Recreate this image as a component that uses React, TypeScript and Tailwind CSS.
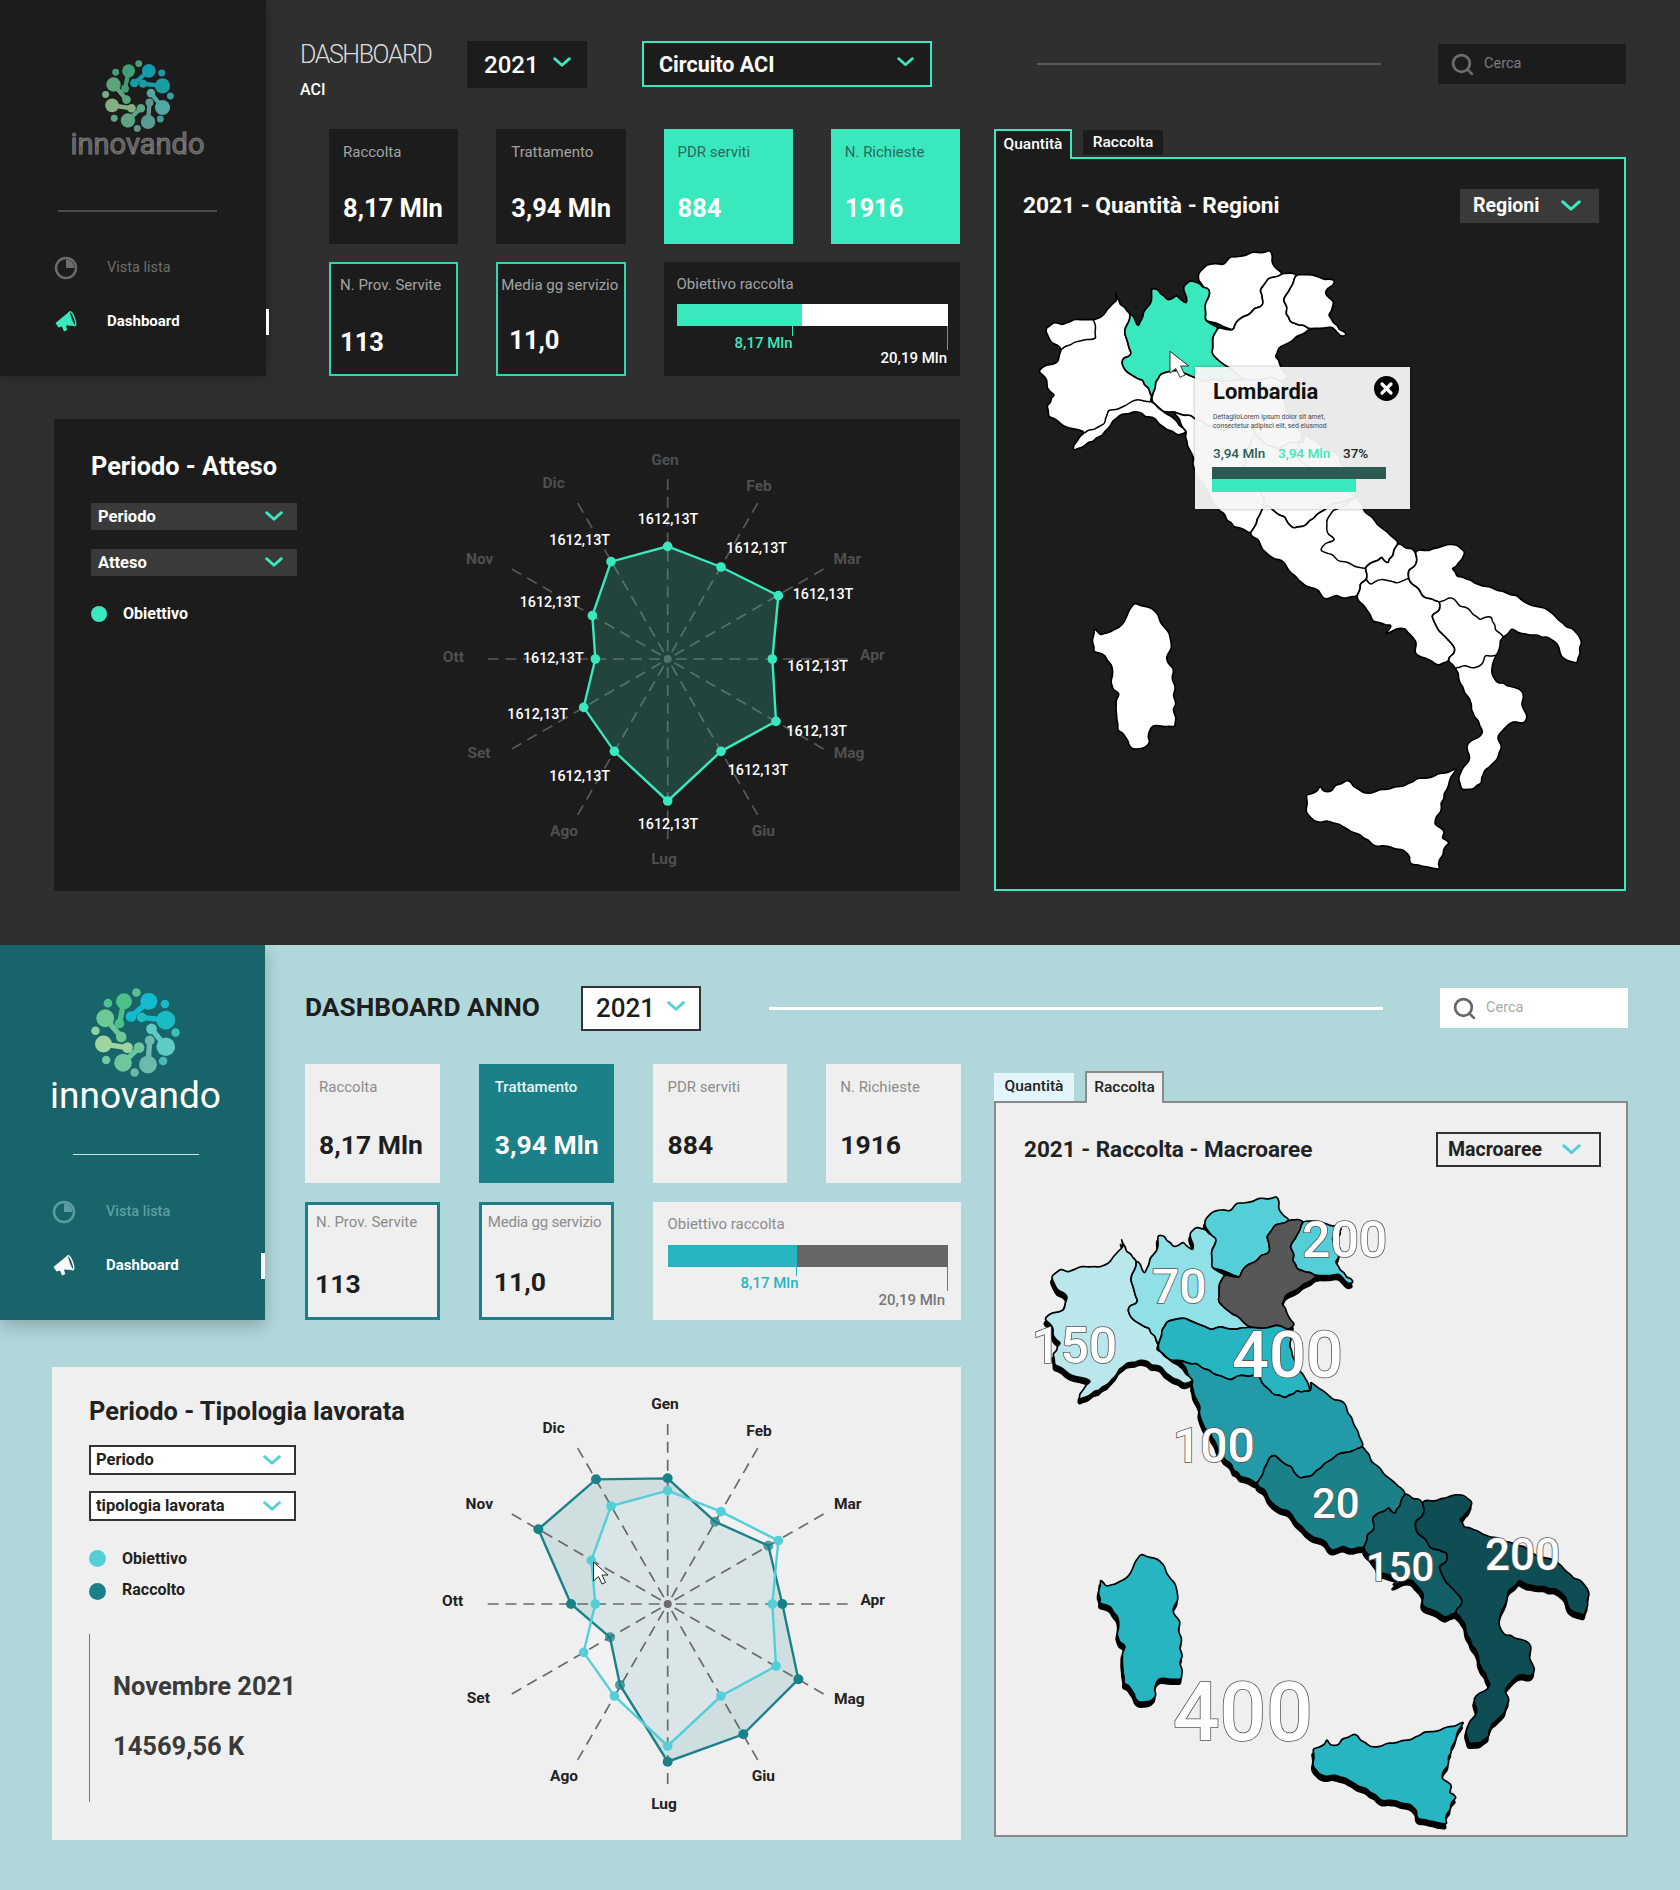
import React from "react";
import { Search } from "lucide-react";

type Pt = [number, number];
const parse = (s: string): Pt[] =>
  s.trim().split(/\s+/).map((p) => p.split(",").map(Number) as Pt);
const shift = (s: string, dx: number, dy: number) =>
  parse(s).map(([x, y]) => `${x + dx},${y + dy}`).join(" ");
const hash = (n: number) => {
  const v = Math.sin(n * 12.9898) * 43758.5453;
  return v - Math.floor(v) - 0.5;
};
const wobble = (s: string, closed = true) => {
  const pts = parse(s);
  if (closed) pts.push(pts[0]);
  const all: Pt[] = [pts[0]];
  for (let i = 0; i < pts.length - 1; i++) {
    const a = pts[i];
    const b = pts[i + 1];
    const flip = a[0] > b[0] || (a[0] === b[0] && a[1] > b[1]);
    const A = flip ? b : a;
    const B = flip ? a : b;
    const len = Math.hypot(B[0] - A[0], B[1] - A[1]);
    const n = Math.max(1, Math.floor(len / 13));
    const seg: Pt[] = [];
    for (let k = 1; k < n; k++) {
      const t = k / n;
      const j = hash(A[0] * 3.1 + A[1] * 7.7 + k * 13.3 + B[0]) * 11;
      seg.push([
        A[0] + (B[0] - A[0]) * t + (-(B[1] - A[1]) / len) * j,
        A[1] + (B[1] - A[1]) * t + ((B[0] - A[0]) / len) * j,
      ]);
    }
    if (flip) seg.reverse();
    seg.forEach((p) => all.push(p));
    all.push(b);
  }
  const mid = (p: Pt, q: Pt): Pt => [(p[0] + q[0]) / 2, (p[1] + q[1]) / 2];
  const f = (p: Pt) => `${p[0].toFixed(1)},${p[1].toFixed(1)}`;
  if (closed) {
    all.pop();
    const m0 = mid(all[all.length - 1], all[0]);
    let d = `M${f(m0)}`;
    all.forEach((p, i) => {
      d += ` Q${f(p)} ${f(mid(p, all[(i + 1) % all.length]))}`;
    });
    return d + "Z";
  }
  let d = `M${f(all[0])}`;
  for (let i = 1; i < all.length - 1; i++) d += ` Q${f(all[i])} ${f(mid(all[i], all[i + 1]))}`;
  return d + ` L${f(all[all.length - 1])}`;
};

const NW =
  "255,155 262,180 240,200 222,225 190,240 145,238 95,255 75,245 45,268 55,290 65,310 95,328 85,365 50,375 25,395 45,410 50,440 75,465 50,495 55,530 90,550 150,570 165,578 130,615 130,632 190,605 235,565 270,525 310,515 360,530 400,560 440,585 470,575 431,535 395,510 360,485 366,470 340,420 290,395 275,365 305,340 285,265 300,220 270,195";
const LOMB =
  "285,265 300,220 325,260 340,215 362,190 365,145 385,148 410,180 440,165 470,190 460,140 480,122 510,130 540,155 525,190 525,240 565,262 548,290 545,340 590,380 640,418 600,424 555,416 525,426 490,411 446,391 411,396 391,401 376,426 366,470 340,420 290,395 275,365 305,340";
const TREN =
  "505,100 530,75 580,75 600,50 650,45 720,30 725,65 758,100 715,115 690,150 700,190 655,225 620,245 610,270 570,255 525,240 525,190 540,155 505,120";
const VEN =
  "758,100 800,105 790,130 760,180 780,245 850,265 790,300 745,325 735,350 755,385 775,410 755,426 720,411 670,421 640,418 590,380 545,340 548,290 565,262 610,270 620,245 655,225 700,190 690,150 715,115";
const FRIULI =
  "800,105 870,112 915,122 885,160 912,185 895,225 910,250 950,285 935,290 905,260 880,265 850,265 780,245 760,180 790,130";
const EMILIA =
  "366,470 376,426 391,401 411,396 446,391 490,411 525,426 555,416 600,424 640,418 670,421 720,411 755,426 765,485 780,534 815,584 820,608 780,604 745,628 710,618 675,584 670,564 620,559 585,574 540,559 480,525 431,515 401,515 366,485";
const CENTRE =
  "431,515 470,575 471,603 486,643 491,682 525,742 565,810 610,860 660,880 680,850 700,801 715,796 740,820 765,830 790,865 820,860 859,825 894,801 979,771 954,712 924,643 879,623 820,579 820,608 780,604 745,628 710,618 675,584 670,564 620,559 585,574 540,559 480,525";
const LAZIO =
  "660,880 690,910 710,940 755,960 775,990 830,1040 855,1045 885,1078 920,1065 950,1075 980,1070 990,1030 1010,1020 1005,985 1030,965 1055,950 1075,970 1105,910 1050,860 1000,810 979,771 894,801 859,825 820,860 790,865 765,830 740,820 715,796 700,801 680,850";
const CAMP =
  "1105,910 1155,935 1160,970 1135,990 1135,1015 1160,1040 1190,1075 1230,1085 1230,1110 1205,1125 1220,1160 1255,1200 1275,1225 1255,1265 1225,1277 1200,1260 1155,1240 1160,1210 1125,1165 1100,1165 1065,1182 1085,1155 1030,1145 1010,1110 980,1070 990,1030 1010,1020 1005,985 1030,965 1055,950 1075,970";
const SOUTH = shift(
  "645,155 700,145 770,135 795,155 785,180 755,205 770,230 880,265 950,285 990,315 1050,335 1090,370 1135,405 1145,430 1132,490 1085,470 1070,430 1040,410 1000,405 960,400 935,385 910,410 890,465 875,520 885,540 935,560 970,580 965,610 982,650 975,668 930,670 895,705 905,745 885,785 855,810 845,850 820,868 785,870 775,835 790,800 810,770 800,735 815,720 848,700 820,640 805,590 780,550 765,505 745,485 765,445 745,420 710,380 695,345 720,330 720,305 680,295 650,260 625,235 625,210 650,190",
  510,
  780
);
const SICILY = shift(
  "770,805 740,870 705,975 735,995 725,1015 748,1030 720,1075 720,1108 680,1100 640,1095 610,1050 570,1040 530,1040 490,1015 440,985 390,965 350,965 320,940 318,885 355,870 360,855 370,875 395,875 405,855 440,840 460,860 505,880 540,868 600,860 650,835 700,830",
  510,
  780
);
const SARD = shift(
  "165,128 200,140 215,145 235,165 240,185 270,230 275,265 258,295 280,325 285,500 250,500 225,495 208,515 210,545 190,565 160,568 135,530 112,512 110,465 108,420 120,400 100,390 92,365 98,330 75,285 40,275 42,205 60,225 100,210 130,190 145,155",
  150,
  960
);
const SEAMS = [
  "190,240 198,295 135,305 95,328",
  "165,578 225,550 235,510 290,495 325,478 360,485",
  shift("720,305 760,295 780,320 810,330 840,360 875,350 885,390 910,410", 510, 780),
  shift("765,505 795,495 815,505 845,495 855,465 890,465", 510, 780),
  shift("500,240 510,255 535,240 590,250 625,235", 510, 780),
  shift("469,-9 400,30 380,60 380,90 405,120 375,130 360,150 400,165 415,185 450,190 495,205", 510, 780),
  "700,801 690,720 640,690 655,620 675,584",
  "820,579 790,640 850,690 900,720 979,771",
];

const DARK_REGIONS = [NW, TREN, VEN, FRIULI, EMILIA, CENTRE, LAZIO, CAMP, SOUTH, SICILY, SARD];
const LIGHT_REGIONS: [string, string][] = [
  [NW, "#b9e7eb"],
  [LOMB, "#90e0e7"],
  [TREN, "#54cfd8"],
  [FRIULI, "#54cfd8"],
  [VEN, "#575757"],
  [EMILIA, "#26b5c1"],
  [SARD, "#26b5c1"],
  [SICILY, "#26b5c1"],
  [CENTRE, "#229aa8"],
  [LAZIO, "#1b8189"],
  [CAMP, "#115e66"],
  [SOUTH, "#0f4d55"],
];

function DarkMap() {
  return (
    <svg width="572" height="640" viewBox="0 0 572 640" className="block">
      <g transform="scale(0.33333)" strokeLinejoin="round" strokeLinecap="round">
        {DARK_REGIONS.map((r, i) => (
          <path key={i} d={wobble(r)} fill="#ffffff" stroke="#000000" strokeWidth="5" />
        ))}
        {SEAMS.map((r, i) => (
          <path key={i} d={wobble(r, false)} fill="none" stroke="#000000" strokeWidth="4.5" />
        ))}
        <path d={wobble(LOMB)} fill="#3ae8bd" stroke="#000000" strokeWidth="5" />
        <path
          d="M420,335 L420,400 L437,385 L450,412 L465,405 L452,378 L475,378 Z"
          fill="#ffffff"
          stroke="#333333"
          strokeWidth="3"
        />
      </g>
    </svg>
  );
}

const NUMS: [string, number, number, number][] = [
  ["150", 2, 173, 50],
  ["70", 122, 113, 48],
  ["200", 272, 67, 50],
  ["400", 202, 187, 65],
  ["100", 143, 272, 48],
  ["20", 282, 328, 42],
  ["150", 336, 391, 40],
  ["200", 455, 380, 44],
  ["400", 143, 550, 82],
];

function LightMap() {
  return (
    <svg width="590" height="640" viewBox="0 0 590 640" className="block">
      <g transform="translate(6,-4) scale(0.3343,0.338)" strokeLinejoin="round" strokeLinecap="round">
        <g transform="translate(-3,14)">
          {LIGHT_REGIONS.map(([r], i) => (
            <path key={i} d={wobble(r)} fill="#000000" stroke="#000000" strokeWidth="6" />
          ))}
        </g>
        {LIGHT_REGIONS.map(([r, c], i) => (
          <path key={i} d={wobble(r)} fill={c} stroke="#000000" strokeWidth="5" />
        ))}
      </g>
      {NUMS.map(([t, x, y, s], i) => (
        <text
          key={i}
          x={x}
          y={y}
          fontSize={s}
          fontWeight={500}
          fill="#ffffff"
          stroke="#555555"
          strokeWidth="1.6"
          paintOrder="stroke"
        >
          {t}
        </text>
      ))}
    </svg>
  );
}

const MONTHS = ["Gen", "Feb", "Mar", "Apr", "Mag", "Giu", "Lug", "Ago", "Set", "Ott", "Nov", "Dic"];
const poly = (p: Pt[]) => p.map(([x, y]) => `${x / 3},${y / 3}`).join(" ");

function Axes({ cx, cy, color }: { cx: number; cy: number; color: string }) {
  return (
    <g>
      {MONTHS.map((_, i) => {
        const a = (i * Math.PI) / 6;
        const r1 = 8;
        const r2 = 180;
        return (
          <line
            key={i}
            x1={cx + Math.sin(a) * r1}
            y1={cy - Math.cos(a) * r1}
            x2={cx + Math.sin(a) * r2}
            y2={cy - Math.cos(a) * r2}
            stroke={color}
            strokeWidth="1.7"
            strokeDasharray="11 6.9"
          />
        );
      })}
      <circle cx={cx} cy={cy} r="4" fill={color} />
    </g>
  );
}

function MonthLabels({ pos, fill }: { pos: Pt[]; fill: string }) {
  return (
    <g>
      {pos.map(([x, y], i) => (
        <text key={i} x={x / 3} y={y / 3} textAnchor="middle" dominantBaseline="central" fontSize="15.5" fontWeight={700} fill={fill}>
          {MONTHS[i]}
        </text>
      ))}
    </g>
  );
}

function DarkRadar() {
  const pts: Pt[] = [[713,319],[873,381],[1045,467],[1027,657],[1038,844],[873,934],[713,1083],[553,934],[461,802],[496,657],[487,527],[543,365]];
  const labels: Pt[] = [[705,60],[987,138],[1252,357],[1327,646],[1257,940],[1000,1174],[702,1256],[402,1174],[147,938],[70,650],[149,356],[371,130]];
  const vals: Pt[] = [[714,238],[980,324],[1179,461],[1163,678],[1160,872],[984,990],[714,1153],[449,1009],[323,822],[370,654],[360,487],[449,300]];
  return (
    <svg width="480" height="440" viewBox="0 0 480 440" className="block shrink-0">
      <Axes cx={237.7} cy={219} color="#585858" />
      <polygon points={poly(pts)} fill="#3ae8bd" fillOpacity="0.2" stroke="#3ae8bd" strokeWidth="2.4" />
      {pts.map(([x, y], i) => (
        <circle key={i} cx={x / 3} cy={y / 3} r="4.8" fill="#3ae8bd" />
      ))}
      <MonthLabels pos={labels} fill="#4f4f4f" />
      {vals.map(([x, y], i) => (
        <text key={i} x={x / 3} y={y / 3} textAnchor="middle" dominantBaseline="central" fontSize="14.3" fontWeight={500} fill="#ffffff">
          1612,13T
        </text>
      ))}
    </svg>
  );
}

function LightRadar() {
  const a: Pt[] = [[713,295],[855,425],[1015,497],[1057,672],[1105,898],[940,1063],[713,1145],[570,915],[540,772],[423,672],[325,448],[498,298]];
  const b: Pt[] = [[713,332],[873,395],[1045,482],[1027,672],[1038,858],[873,948],[713,1098],[553,948],[461,817],[496,672],[484,541],[543,378]];
  const labels: Pt[] = [[705,73],[987,152],[1253,372],[1328,661],[1258,957],[1000,1188],[702,1272],[402,1189],[145,955],[68,664],[148,371],[371,144]];
  return (
    <svg width="480" height="440" viewBox="0 0 480 440" className="block shrink-0">
      <polygon points={poly(a)} fill="#1b8189" fillOpacity="0.15" />
      <polygon points={poly(b)} fill="#ffffff" fillOpacity="0.22" />
      <Axes cx={237.7} cy={224} color="#6a6a6a" />
      <polygon points={poly(a)} fill="none" stroke="#1b8189" strokeWidth="2.4" />
      {a.map(([x, y], i) => (
        <circle key={i} cx={x / 3} cy={y / 3} r="5" fill="#1b8189" fillOpacity={[1, 2, 7, 8].includes(i) ? 0.75 : 1} />
      ))}
      <polygon points={poly(b)} fill="none" stroke="#54cfd8" strokeWidth="2.4" />
      {b.map(([x, y], i) => (
        <circle key={i} cx={x / 3} cy={y / 3} r="4.8" fill="#54cfd8" />
      ))}
      <MonthLabels pos={labels} fill="#222222" />
      <path
        d="M163.5,182 L163.5,201 L168.5,196.5 L172,204 L175.5,202.5 L172,195 L178,195 Z"
        fill="#ffffff"
        stroke="#222222"
        strokeWidth="1"
      />
    </svg>
  );
}

function Logo({ size, dim }: { size: number; dim?: boolean }) {
  const blobs: [number, number, number, string, number, number, number][] = [
    [37, 15, 9, "#4cc08a", 32, 40, 5.5],
    [65, 15, 9.5, "#12bcd0", 45, 32, 6],
    [84, 36, 10.5, "#19bcc4", 57, 33, 5.5],
    [16, 34, 10, "#6cc894", 34, 55, 6],
    [14, 63, 9.5, "#9dd49f", 41, 67, 6],
    [84, 66, 10.5, "#5ecbc4", 68, 46, 6],
    [36, 84, 10, "#6cc79c", 54, 67, 6],
    [64, 86, 10, "#6cb9ad", 66, 59, 5.5],
  ];
  const dots: [number, number, string][] = [
    [51, 5, "#5bbd8e"],
    [19, 17, "#4cc392"],
    [83, 18, "#1ab9c9"],
    [5, 48, "#8fd2a0"],
    [95, 50, "#3bc0bf"],
    [17, 81, "#6cc9a4"],
    [81, 82, "#46bdb4"],
    [49, 95, "#6fb5ab"],
  ];
  return (
    <svg width={size} height={size} viewBox="0 0 100 100" className={dim ? "block opacity-80" : "block"}>
      {blobs.map(([x, y, r, c, x2, y2, r2], i) => (
        <g key={i} fill={c}>
          <line x1={x} y1={y} x2={x2} y2={y2} stroke={c} strokeWidth="6" />
          <circle cx={x} cy={y} r={r} />
          <circle cx={x2} cy={y2} r={r2} />
        </g>
      ))}
      {dots.map(([x, y, c], i) => (
        <circle key={i} cx={x} cy={y} r="4.8" fill={c} />
      ))}
    </svg>
  );
}

function PieIcon({ color }: { color: string }) {
  return (
    <svg width="24" height="24" viewBox="0 0 24 24" className="block shrink-0">
      <circle cx="12" cy="12" r="10" fill="none" stroke={color} strokeWidth="2.4" />
      <path d="M12 3.6 A8.4 8.4 0 0 1 20.4 12 L12 12 Z" fill={color} />
    </svg>
  );
}

function HornIcon({ color }: { color: string }) {
  return (
    <svg width="24" height="24" viewBox="0 0 24 24" className="block shrink-0">
      <path
        d="M1.5 14 L15.5 2.5 L21 17 L12 16.5 L13.2 21 L10 22.5 L8 17.5 L4.5 18.5 Z"
        fill={color}
      />
      <ellipse cx="18.3" cy="9.8" rx="2.2" ry="7.4" transform="rotate(-20 18.3 9.8)" fill="none" stroke={color} strokeWidth="1.4" />
      <ellipse cx="18.3" cy="10" rx="1.1" ry="4.8" transform="rotate(-20 18.3 10)" fill="#000000" fillOpacity="0.25" />
    </svg>
  );
}

function Chev({ w, color }: { w: number; color: string }) {
  return (
    <svg width={w} height={w * 0.56} viewBox="0 0 18 10" fill="none" className="block shrink-0">
      <polyline points="1.6,1.6 9,8.2 16.4,1.6" stroke={color} strokeWidth="2.8" strokeLinecap="round" strokeLinejoin="round" />
    </svg>
  );
}

function Card({
  className,
  labelClass,
  valueClass,
  label,
  value,
}: {
  className: string;
  labelClass: string;
  valueClass: string;
  label: string;
  value: string;
}) {
  return (
    <div className={`flex flex-col ${className}`}>
      <div className={`leading-[22px] whitespace-nowrap ${labelClass}`}>{label}</div>
      <div className={`leading-[34px] font-bold whitespace-nowrap ${valueClass}`}>{value}</div>
    </div>
  );
}

const DT = "#3ae8bd";
const LT = "#54cfd8";

function DarkSection() {
  const lbl = "text-[15px] text-[#a3a3a3]";
  const val = "text-[25.5px] text-white";
  return (
    <section className="h-[945px] bg-[#2f2f2f] grid grid-cols-[266px_694px_34px_632px] grid-rows-[129px_247px_43px_472px] content-start">
      <aside className="row-start-1 row-span-2 col-start-1 bg-[#1c1c1c] shadow-[0_0_14px_rgba(0,0,0,0.25)] relative z-10 flex flex-col items-center pt-[60px] pl-[9px]">
        <Logo size={72} dim />
        <div className="text-[29px] leading-[28px] -mt-[2px] font-normal text-[#5c5c5c] [-webkit-text-stroke:1px_#777777]">innovando</div>
        <div className="w-[159px] h-[2px] bg-[#4c4c4c] mt-[52px]" />
        <nav className="w-full flex flex-col pl-[45px] pt-[44px] gap-[29px]">
          <div className="flex items-center h-[24px] text-[14.5px] text-[#6e6e6e]">
            <PieIcon color="#6b6b6b" />
            <span className="ml-[29px]">Vista lista</span>
          </div>
          <div className="flex items-center h-[24px] text-[15px] font-bold text-white relative">
            <HornIcon color={DT} />
            <span className="ml-[29px]">Dashboard</span>
            <span className="absolute right-[-3px] top-0 w-[3px] h-[26px] bg-white" />
          </div>
        </nav>
      </aside>

      <header className="col-start-2 col-span-3 row-start-1 h-[129px] pb-[1px] flex items-center text-white">
        <div className="w-[167px] ml-[34px] self-start mt-[39px]">
          <div className="text-[25px] leading-[32px] font-light tracking-[-1.4px] text-[#dcdcdc]">DASHBOARD</div>
          <div className="text-[16px] leading-[20px] font-medium mt-[9px]">ACI</div>
        </div>
        <div className="w-[120px] h-[47px] bg-[#1c1c1c] flex items-center justify-between pl-[17px] pr-[16px] text-[24px] font-medium">
          <span className="pt-[2px]">2021</span>
          <div className="-mt-[4px]">
            <Chev w={18} color={DT} />
          </div>
        </div>
        <div className="ml-[55px] w-[290px] h-[46px] bg-[#1c1c1c] border-2 border-[#3ae8bd] flex items-center justify-between pl-[15px] pr-[16px] text-[21.5px] font-bold">
          <span className="pt-[2px]">Circuito ACI</span>
          <div className="-mt-[4px]">
            <Chev w={17} color={DT} />
          </div>
        </div>
        <div className="ml-[105px] w-[344px] h-[2px] bg-[#5a5a5a]" />
        <div className="ml-[57px] w-[188px] h-[40px] bg-[#1c1c1c] flex items-center pl-[12px] text-[14.5px] text-[#7d7d7d]">
          <Search className="w-[25px] h-[25px] text-[#6d6d6d]" strokeWidth={2.6} />
          <span className="ml-[9px]">Cerca</span>
        </div>
      </header>

      <div className="col-start-2 row-start-2 pl-[63px] grid grid-cols-4 gap-x-[38px] gap-y-[18px] grid-rows-[115px_114px]">
        <Card className="bg-[#1c1c1c] pl-[14px] pt-[12px]" labelClass={lbl} valueClass={`${val} mt-[28px]`} label="Raccolta" value="8,17 Mln" />
        <Card className="bg-[#1c1c1c] pl-[15px] pt-[12px]" labelClass={lbl} valueClass={`${val} mt-[28px]`} label="Trattamento" value="3,94 Mln" />
        <Card className="bg-[#3ae8bd] pl-[14px] pt-[12px]" labelClass="text-[15px] text-[#2a6b5c]" valueClass={`${val} mt-[28px]`} label="PDR serviti" value="884" />
        <Card className="bg-[#3ae8bd] pl-[14px] pt-[12px]" labelClass="text-[15px] text-[#2a6b5c]" valueClass={`${val} mt-[28px]`} label="N. Richieste" value="1916" />
        <Card className="bg-[#1c1c1c] border-2 border-[#2fd6ae] pl-[9px] pt-[10px]" labelClass={lbl} valueClass={`${val} mt-[29px]`} label="N. Prov. Servite" value="113" />
        <Card className="bg-[#1c1c1c] border-2 border-[#2fd6ae] pl-[3px] pt-[10px]" labelClass={lbl} valueClass={`${val} mt-[27px] ml-[8px]`} label="Media gg servizio" value="11,0" />
        <div className="col-span-2 bg-[#1c1c1c] pl-[13px] pr-[12px] pt-[11px] flex flex-col">
          <div className="text-[15px] leading-[22px] text-[#a3a3a3]">Obiettivo raccolta</div>
          <div className="flex h-[22px] mt-[9px] bg-white">
            <div className="w-[125px] bg-[#3ae8bd]" />
          </div>
          <div className="flex text-[15px] font-medium">
            <div className="w-[116px] flex flex-col items-end text-[#3ae8bd]">
              <div className="w-px h-[10px] bg-[#3ae8bd]" />
              <div className="leading-[15px] whitespace-nowrap">8,17 Mln</div>
            </div>
            <div className="flex-1 flex flex-col items-end text-white">
              <div className="w-px h-[24px] bg-[#8a8a8a]" />
              <div className="leading-[16px] whitespace-nowrap mr-[1px]">20,19 Mln</div>
            </div>
          </div>
        </div>
      </div>

      <div className="col-start-4 row-start-2 row-span-3 flex flex-col text-white">
        <div className="flex items-start h-[28px]">
          <div className="relative z-10 w-[78px] h-[30px] bg-[#1c1c1c] border-2 border-b-0 border-[#3ae8bd] flex items-center justify-center text-[15.5px] font-medium">Quantità</div>
          <div className="ml-[11px] mt-[1px] w-[80px] h-[25px] bg-[#1c1c1c] flex items-center justify-center text-[15.5px] font-medium">Raccolta</div>
        </div>
        <div className="relative h-[735px] bg-[#1c1c1c] border-2 border-[#3ae8bd]">
          <div className="h-[81px] pt-[13px] pl-[27px] pr-[25px] flex items-center justify-between">
            <div className="text-[22.7px] font-bold whitespace-nowrap">2021 - Quantità - Regioni</div>
            <div className="w-[139px] h-[34px] bg-[#3a3a3a] flex items-center justify-between pl-[13px] pr-[18px] text-[19.5px] font-bold">
              Regioni
              <Chev w={20} color={DT} />
            </div>
          </div>
          <div className="ml-[34px]">
            <DarkMap />
          </div>
          <div className="absolute left-[199px] top-[208px] w-[215px] h-[142px] bg-[#f6f6f6]/95 shadow-[0_0_3px_rgba(0,0,0,0.35)] pl-[18px] pt-[9px] text-[#111111]">
            <div className="text-[22px] leading-[32px] font-bold">Lombardia</div>
            <div className="absolute right-[11px] top-[9px] w-[25px] h-[25px] rounded-full bg-black text-white flex items-center justify-center">
              <svg width="15" height="15" viewBox="0 0 15 15">
                <path d="M3 3 L12 12 M12 3 L3 12" stroke="#ffffff" strokeWidth="3.2" strokeLinecap="round" />
              </svg>
            </div>
            <div className="text-[6.8px] leading-[9px] text-[#444444] mt-[5px] whitespace-nowrap">
              DettaglioLorem ipsum dolor sit amet,
              <br />
              consectetur adipisci elit, sed eiusmod
            </div>
            <div className="flex text-[13.5px] leading-[16px] font-medium mt-[14px]">
              <span className="w-[65px] text-[#2a5f52]">3,94 Mln</span>
              <span className="w-[65px] text-[#3ae8bd]">3,94 Mln</span>
              <span className="text-[#222222]">37%</span>
            </div>
            <div className="w-[174px] h-[12px] bg-[#2a5a50] mt-[6px] -ml-px" />
            <div className="w-[144px] h-[13px] bg-[#3ae8bd] -ml-px" />
          </div>
        </div>
      </div>

      <div className="col-start-1 col-span-2 row-start-4 ml-[54px] bg-[#1c1c1c] flex text-white">
        <div className="w-[376px] shrink-0 pl-[37px] pt-[34px]">
          <div className="text-[25.3px] leading-[28px] font-bold whitespace-nowrap">Periodo - Atteso</div>
          <div className="w-[206px] h-[27px] bg-[#3a3a3a] mt-[22px] flex items-center justify-between pl-[7px] pr-[14px] text-[16.5px] font-bold">
            <span className="pt-px">Periodo</span>
            <Chev w={18} color={DT} />
          </div>
          <div className="w-[206px] h-[27px] bg-[#3a3a3a] mt-[19px] flex items-center justify-between pl-[7px] pr-[14px] text-[16.5px] font-bold">
            <span className="pt-px">Atteso</span>
            <Chev w={18} color={DT} />
          </div>
          <div className="flex items-center mt-[30px] text-[16px] font-bold">
            <span className="w-[16px] h-[16px] rounded-full bg-[#3ae8bd]" />
            <span className="ml-[16px] leading-[16px]">Obiettivo</span>
          </div>
        </div>
        <div className="mt-[21px]">
          <DarkRadar />
        </div>
      </div>
    </section>
  );
}

function LightSection() {
  const lbl = "text-[15px] text-[#8c8c8c]";
  const val = "text-[26.5px] text-[#1e1e1e]";
  return (
    <section className="h-[945px] bg-[#b0d7da] grid grid-cols-[265px_696px_34px_633px] grid-rows-[119px_256px_47px_473px] content-start">
      <aside className="row-start-1 row-span-2 col-start-1 bg-[#17646a] shadow-[0_6px_16px_rgba(0,0,0,0.22)] relative z-10 flex flex-col items-center pt-[43px] pl-[6px]">
        <Logo size={89} />
        <div className="text-[37px] leading-[38px] font-normal text-white mt-[0px]">innovando</div>
        <div className="w-[126px] h-px bg-[#c9e4e6] mt-[39px]" />
        <nav className="w-full flex flex-col pl-[46px] pt-[45px] gap-[29px]">
          <div className="flex items-center h-[24px] text-[14.5px] font-medium text-[#5c9da2]">
            <PieIcon color="#5c9da2" />
            <span className="ml-[30px]">Vista lista</span>
          </div>
          <div className="flex items-center h-[24px] text-[15px] font-bold text-white relative">
            <HornIcon color="#ffffff" />
            <span className="ml-[30px]">Dashboard</span>
            <span className="absolute right-0 top-0 w-[4px] h-[26px] bg-white" />
          </div>
        </nav>
      </aside>

      <header className="col-start-2 col-span-3 row-start-1 h-[119px] pt-[7px] flex items-center text-[#1e1e1e]">
        <div className="ml-[40px] w-[276px] text-[26.3px] font-bold whitespace-nowrap">DASHBOARD ANNO</div>
        <div className="w-[120px] h-[45px] bg-white border-2 border-[#333333] flex items-center justify-between pl-[13px] pr-[14px] text-[26px] font-medium">
          2021
          <div className="-mt-[4px]">
            <Chev w={18} color={LT} />
          </div>
        </div>
        <div className="ml-[68px] w-[614px] h-[3px] bg-white" />
        <div className="ml-[57px] w-[188px] h-[40px] bg-white flex items-center pl-[12px] text-[14.5px] text-[#a9a9a9]">
          <Search className="w-[25px] h-[25px] text-[#666666]" strokeWidth={2.6} />
          <span className="ml-[9px]">Cerca</span>
        </div>
      </header>

      <div className="col-start-2 row-start-2 pl-[40px] grid grid-cols-4 gap-x-[39px] gap-y-[19px] grid-rows-[119px_118px]">
        <Card className="bg-[#efefef] pl-[14px] pt-[12px]" labelClass={lbl} valueClass={`${val} mt-[30px]`} label="Raccolta" value="8,17 Mln" />
        <Card className="bg-[#1b8088] pl-[16px] pt-[12px]" labelClass="text-[15px] font-medium text-[#e8f4f4]" valueClass="text-[26.5px] text-white mt-[30px]" label="Trattamento" value="3,94 Mln" />
        <Card className="bg-[#efefef] pl-[15px] pt-[12px]" labelClass={lbl} valueClass={`${val} mt-[30px]`} label="PDR serviti" value="884" />
        <Card className="bg-[#efefef] pl-[14px] pt-[12px]" labelClass={lbl} valueClass={`${val} mt-[30px]`} label="N. Richieste" value="1916" />
        <Card className="bg-[#efefef] border-[3px] border-[#1b8088] pl-[8px] pt-[6px]" labelClass={lbl} valueClass={`${val} mt-[34px] -ml-px`} label="N. Prov. Servite" value="113" />
        <Card className="bg-[#efefef] border-[3px] border-[#1b8088] pl-[6px] pt-[6px]" labelClass={`${lbl} tracking-[-0.2px]`} valueClass={`${val} mt-[32px] ml-[6px]`} label="Media gg servizio" value="11,0" />
        <div className="col-span-2 bg-[#efefef] pl-[15px] pr-[13px] pt-[11px] flex flex-col">
          <div className="text-[15px] leading-[22px] text-[#8c8c8c]">Obiettivo raccolta</div>
          <div className="flex h-[22px] mt-[10px] bg-[#666666]">
            <div className="w-[129px] bg-[#26b5c1]" />
          </div>
          <div className="flex text-[15px] font-medium">
            <div className="w-[129px] flex flex-col items-end text-[#26b5c1]">
              <div className="w-px h-[9px] bg-[#26b5c1]" />
              <div className="leading-[15px] whitespace-nowrap -mr-[2px]">8,17 Mln</div>
            </div>
            <div className="flex-1 flex flex-col items-end text-[#777777]">
              <div className="w-px h-[24px] bg-[#777777]" />
              <div className="leading-[16px] whitespace-nowrap mr-[3px] mt-[1px]">20,19 Mln</div>
            </div>
          </div>
        </div>
      </div>

      <div className="col-start-4 row-start-2 row-span-3 -ml-px pt-[7px] flex flex-col text-[#222222]">
        <div className="flex items-start h-[30px]">
          <div className="mt-[2px] w-[80px] h-[28px] bg-[#e4f4fb] flex items-center justify-center text-[15.5px] font-medium">Quantità</div>
          <div className="relative z-10 ml-[11px] w-[79px] h-[32px] bg-[#efefef] border-2 border-b-0 border-[#8a8a8a] flex items-center justify-center text-[15.5px] font-medium">Raccolta</div>
        </div>
        <div className="h-[736px] bg-[#efefef] border-2 border-[#8a8a8a]">
          <div className="h-[87px] pt-[6px] pl-[28px] pr-[25px] flex items-center justify-between">
            <div className="text-[22.5px] font-bold whitespace-nowrap">2021 - Raccolta - Macroaree</div>
            <div className="w-[165px] h-[35px] border-2 border-[#333333] flex items-center justify-between pl-[10px] pr-[18px] text-[19.5px] font-bold">
              Macroaree
              <Chev w={19} color={LT} />
            </div>
          </div>
          <div className="ml-[34px]">
            <LightMap />
          </div>
        </div>
      </div>

      <div className="col-start-1 col-span-2 row-start-4 ml-[52px] bg-[#efefef] flex text-[#222222]">
        <div className="w-[378px] shrink-0 pl-[37px] pt-[30px]">
          <div className="text-[25.4px] leading-[28px] font-bold whitespace-nowrap">Periodo - Tipologia lavorata</div>
          <div className="w-[207px] h-[30px] bg-white border-2 border-[#333333] mt-[20px] flex items-center justify-between pl-[5px] pr-[13px] text-[16.5px] font-bold">
            <span className="pt-px">Periodo</span>
            <Chev w={18} color={LT} />
          </div>
          <div className="w-[207px] h-[30px] bg-white border-2 border-[#333333] mt-[16px] flex items-center justify-between pl-[5px] pr-[13px] text-[16.5px] font-bold">
            <span className="pt-px">tipologia lavorata</span>
            <Chev w={18} color={LT} />
          </div>
          <div className="flex items-center mt-[29px] text-[16px] font-bold">
            <span className="w-[17px] h-[17px] rounded-full bg-[#54cfd8]" />
            <span className="ml-[16px] leading-[17px]">Obiettivo</span>
          </div>
          <div className="flex items-center mt-[16px] text-[16px] font-bold">
            <span className="w-[17px] h-[17px] rounded-full bg-[#1b8189]" />
            <span className="ml-[16px] leading-[17px] -mt-[4px]">Raccolto</span>
          </div>
          <div className="mt-[34px] h-[168px] border-l border-[#777777] pl-[23px] pt-[36px] text-[#3a3a3a]">
            <div className="text-[25.5px] leading-[32px] font-bold whitespace-nowrap">Novembre 2021</div>
            <div className="text-[25.5px] leading-[32px] font-bold mt-[28px] whitespace-nowrap">14569,56 K</div>
          </div>
        </div>
        <div className="mt-[13px]">
          <LightRadar />
        </div>
      </div>
    </section>
  );
}

export default function App() {
  return (
    <div className="w-[1680px] h-[1890px] overflow-hidden font-[family-name:Roboto,sans-serif]">
      <DarkSection />
      <LightSection />
    </div>
  );
}
